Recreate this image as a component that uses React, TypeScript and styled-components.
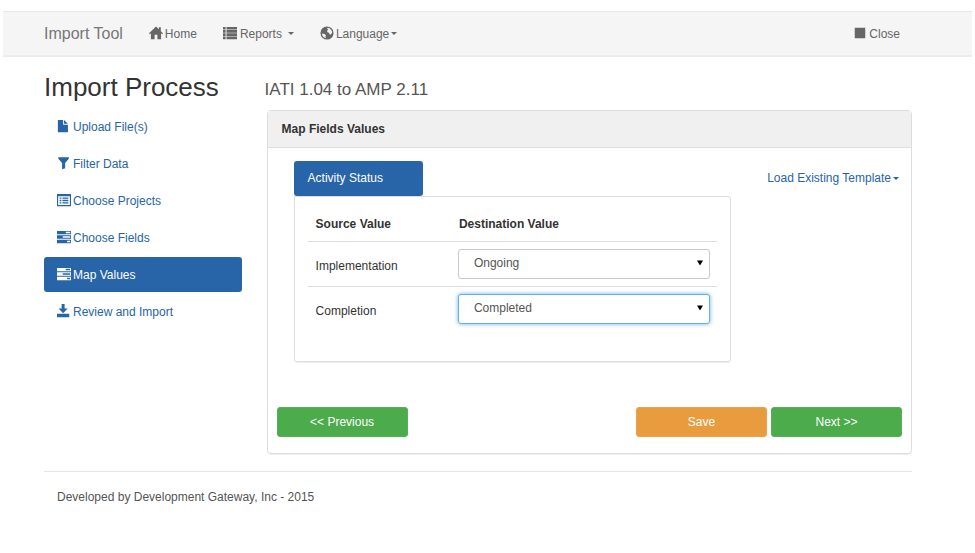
import React from 'react';
import styled, { createGlobalStyle, css } from 'styled-components';

const blue = '#2764a8';

const GlobalStyle = createGlobalStyle`
  * { box-sizing: border-box; }
  body {
    margin: 0;
    background: #fff;
    color: #333;
    font: 12px/20px "Liberation Sans", Arial, sans-serif;
  }
  button, select { font: inherit; }
`;

const Page = styled.div`
  padding: 11px 3px 0;
`;

const Navbar = styled.nav`
  display: flex;
  align-items: center;
  height: 46px;
  padding: 0 72px 0 41px;
  background: #f5f5f5;
  border-top: 1px solid #e7e7e7;
  border-bottom: 2px solid #ececec;
`;

const Brand = styled.a`
  margin-right: 26px;
  font-size: 16px;
  color: #777;
  text-decoration: none;
`;

const Menu = styled.div`
  display: flex;
  flex: 1;
  gap: 26px;
`;

const MenuButton = styled.button`
  display: flex;
  align-items: center;
  padding: 0;
  border: 0;
  background: none;
  color: #666;
  cursor: pointer;
`;

const MenuLink = styled.a`
  display: flex;
  align-items: center;
  color: #666;
  text-decoration: none;
`;

const Glyph = styled.svg<{ $gap?: number }>`
  flex: none;
  width: 14px;
  height: 14px;
  margin: 0 ${({ $gap = 2 }) => $gap}px 2px 0;
  fill: currentColor;
`;

const Caret = styled.span<{ $gap?: number }>`
  margin-left: ${({ $gap = 2 }) => $gap}px;
  border: 3px solid transparent;
  border-top-color: currentColor;
  border-bottom: 0;
`;

const Content = styled.div`
  padding: 0 60px 0 41px;
`;

const Columns = styled.div`
  display: grid;
  grid-template-columns: minmax(180px, 23fr) minmax(0, 75fr);
  column-gap: 26px;
`;

const Title = styled.h1`
  margin: 0;
  padding-top: 14px;
  height: 52px;
  font-size: 26px;
  line-height: 32px;
  font-weight: 400;
  white-space: nowrap;
`;

const Subtitle = styled.h2`
  margin: 0 0 0 -3px;
  padding-top: 23px;
  height: 53px;
  font-size: 17px;
  line-height: 20px;
  font-weight: 400;
  color: #555;
`;

const Steps = styled.ul`
  display: flex;
  flex-direction: column;
  gap: 2px;
  margin: 0;
  padding: 0;
  list-style: none;
`;

const StepLink = styled.a<{ $active?: boolean }>`
  display: flex;
  align-items: center;
  height: 35px;
  padding: 0 13px;
  border-radius: 3px;
  color: ${blue};
  text-decoration: none;
  ${({ $active }) => $active && css`
    background: ${blue};
    color: #fff;
  `}
`;

const Panel = styled.section`
  margin-left: -1px;
  border: 1px solid #ddd;
  border-radius: 4px;
  box-shadow: 0 1px 1px #eee;
`;

const PanelHeading = styled.h3`
  margin: 0;
  padding: 8px 14px;
  background: #f0f0f0;
  border-bottom: 1px solid #ddd;
  font-size: 12px;
  line-height: 20px;
`;

const PanelBody = styled.div`
  display: grid;
  grid-template-columns: minmax(0, 1fr) 180px;
  padding: 13px 0 0 26px;
`;

const Tab = styled.button`
  display: block;
  width: 129px;
  height: 35px;
  padding: 0 14px 2px;
  border: 0;
  border-radius: 3px;
  background: ${blue};
  color: #fff;
  text-align: left;
`;

const TabPane = styled.div`
  min-height: 166px;
  padding: 11px 13px;
  border: 1px solid #ddd;
  border-radius: 0 3px 3px 3px;
  box-shadow: 0 1px 0 #eee;
`;

const TemplateMenu = styled.div`
  display: flex;
  justify-content: flex-end;
  align-items: flex-start;
  padding: 7px 12px 0 0;
`;

const TemplateButton = styled(MenuButton)`
  height: 20px;
  color: ${blue};
`;

const ValueTable = styled.table`
  width: 100%;
  border-collapse: collapse;
  table-layout: fixed;
`;

const HeadCell = styled.th`
  height: 33px;
  padding: 0 8px;
  text-align: left;
  &:first-child { width: 35%; }
`;

const SourceCell = styled.td`
  height: 45px;
  padding: 4px 8px 0;
  border-top: 1px solid #ddd;
`;

const TargetCell = styled.td`
  height: 45px;
  padding: 0 7px;
  border-top: 1px solid #ddd;
`;

const SelectBox = styled.div`
  display: grid;
  align-items: center;
  > * { grid-area: 1 / 1; }
`;

const Select = styled.select<{ $focused?: boolean }>`
  width: 100%;
  height: 30px;
  padding: 0 15px 2px;
  border: 1px solid #ccc;
  border-radius: 3px;
  background: #fff;
  color: #555;
  appearance: none;
  outline: none;
  ${({ $focused }) => $focused && css`
    border-color: #66afe9;
    box-shadow: 0 0 4px #66afe9;
  `}
`;

const SelectArrow = styled.svg`
  justify-self: end;
  width: 6px;
  height: 6px;
  margin: 0 7px 2px 0;
  pointer-events: none;
`;

const Actions = styled.div`
  display: flex;
  gap: 4px;
  padding: 45px 9px 16px;
`;

const ActionButton = styled.button<{ $tone: 'go' | 'save' }>`
  width: 131px;
  height: 30px;
  padding: 0;
  border: 1px solid ${({ $tone }) => ($tone === 'go' ? '#55b155' : '#eda04a')};
  border-radius: 3px;
  background: ${({ $tone }) => ($tone === 'go' ? '#4cab4b' : '#e99c3e')};
  color: #fff;
  &:first-child { margin-right: auto; }
`;

const Footer = styled.footer`
  margin-top: 17px;
  padding: 15px 13px;
  border-top: 1px solid #e5e5e5;
  font-size: 12px;
  color: #555;
`;

const icons = {
  home: <path d="M8 .5 0 8.300l1 1 1.200-1.100V15h4.200v-5h3.200v5h4.200V8.200l1.200 1.100 1-1-2.500-2.400V1.500h-2.200v2.300z" />,
  list: <path d="M0 1h3v3H0zm4 0h12v3H4zM0 4.700h3v3H0zm4 0h12v3H4zM0 8.400h3v3H0zm4 0h12v3H4zM0 12.100h3v3H0zm4 0h12v3H4z" />,
  globe: (
    <path fillRule="evenodd" d="M8 .5a7.500 7.500 0 1 0 0 15 7.500 7.500 0 0 0 0-15zM8.500 2l2.500.7 2.300 2.300.6 2.500-1.500 2.300-1.600-.3-.4-1.800-1.900-.5-.5-1.700 1.600-1.200-1.300-.8zM2.200 8.500l2.800.6 1.800 1.600-.6 1.400.7 1.900-2.500-1.200-1.600-1.800z" />
  ),
  square: <path d="M2 2h12v12H2z" />,
  file: <path d="M1 1h6v5.500h5.500V15H1zm7 0 4.500 4.500H8z" />,
  filter: <path d="M1.500 1.500h12v1.700L9.300 8v6L5.800 15V8L1.500 3.200z" />,
  listAlt: (
    <path fillRule="evenodd" d="M0 1h16v14H0zm1.300 2.600v10.100h13.400V3.600zM3 5h2v1.500H3zm3.200 0H13v1.500H6.200zM3 7.800h2v1.500H3zm3.200 0H13v1.500H6.200zM3 10.600h2v1.500H3zm3.200 0H13v1.500H6.200z" />
  ),
  tasks: (
    <path fillRule="evenodd" d="M0 1h16v3.800H0zm10 1v1.700h5V2zM0 6.100h16v3.800H0zm6.500 1v1.700H15V7.100zM0 11.200h16V15H0zm11.500 1v1.700H15v-1.700z" />
  ),
  save: <path d="M5.300 0h3.400v5h3.500L7 10.500 1.800 5h3.500zM0 11h14v4H0z" />,
};

type IconName = keyof typeof icons;

const Icon = ({ name, gap }: { name: IconName; gap?: number }) => (
  <Glyph viewBox="0 0 16 16" $gap={gap} aria-hidden="true">{icons[name]}</Glyph>
);

const steps: { label: string; icon: IconName }[] = [
  { label: 'Upload File(s)', icon: 'file' },
  { label: 'Filter Data', icon: 'filter' },
  { label: 'Choose Projects', icon: 'listAlt' },
  { label: 'Choose Fields', icon: 'tasks' },
  { label: 'Map Values', icon: 'tasks' },
  { label: 'Review and Import', icon: 'save' },
];

const mappings = [
  { source: 'Implementation', target: 'Ongoing' },
  { source: 'Completion', target: 'Completed', focused: true },
];

export default function App() {
  return (
    <>
      <GlobalStyle />
      <Page>
        <Navbar>
          <Brand href="#">Import Tool</Brand>
          <Menu>
            <MenuLink href="#home"><Icon name="home" />Home</MenuLink>
            <MenuButton type="button"><Icon name="list" gap={3} />Reports<Caret $gap={6} /></MenuButton>
            <MenuButton type="button"><Icon name="globe" />Language<Caret /></MenuButton>
          </Menu>
          <MenuLink href="#close"><Icon name="square" />Close</MenuLink>
        </Navbar>
        <Content>
          <Columns>
            <div>
              <Title>Import Process</Title>
              <Steps>
                {steps.map(({ label, icon }) => (
                  <li key={label}>
                    <StepLink href="#" $active={label === 'Map Values'}>
                      <Icon name={icon} />{label}
                    </StepLink>
                  </li>
                ))}
              </Steps>
            </div>
            <main>
              <Subtitle>IATI 1.04 to AMP 2.11</Subtitle>
              <Panel>
                <PanelHeading>Map Fields Values</PanelHeading>
                <PanelBody>
                  <div>
                    <Tab type="button">Activity Status</Tab>
                    <TabPane>
                      <ValueTable>
                        <thead>
                          <tr>
                            <HeadCell>Source Value</HeadCell>
                            <HeadCell>Destination Value</HeadCell>
                          </tr>
                        </thead>
                        <tbody>
                          {mappings.map(({ source, target, focused }) => (
                            <tr key={source}>
                              <SourceCell><label htmlFor={source}>{source}</label></SourceCell>
                              <TargetCell>
                                <SelectBox>
                                  <Select id={source} defaultValue={target} $focused={focused}>
                                    <option>Ongoing</option>
                                    <option>Completed</option>
                                  </Select>
                                  <SelectArrow viewBox="0 0 7 7" aria-hidden="true">
                                    <path d="M0 .5h7L3.500 6.500z" />
                                  </SelectArrow>
                                </SelectBox>
                              </TargetCell>
                            </tr>
                          ))}
                        </tbody>
                      </ValueTable>
                    </TabPane>
                  </div>
                  <TemplateMenu>
                    <TemplateButton type="button">Load Existing Template<Caret /></TemplateButton>
                  </TemplateMenu>
                </PanelBody>
                <Actions>
                  <ActionButton type="button" $tone="go">&lt;&lt; Previous</ActionButton>
                  <ActionButton type="button" $tone="save">Save</ActionButton>
                  <ActionButton type="button" $tone="go">Next &gt;&gt;</ActionButton>
                </Actions>
              </Panel>
            </main>
          </Columns>
          <Footer>Developed by Development Gateway, Inc - 2015</Footer>
        </Content>
      </Page>
    </>
  );
}
